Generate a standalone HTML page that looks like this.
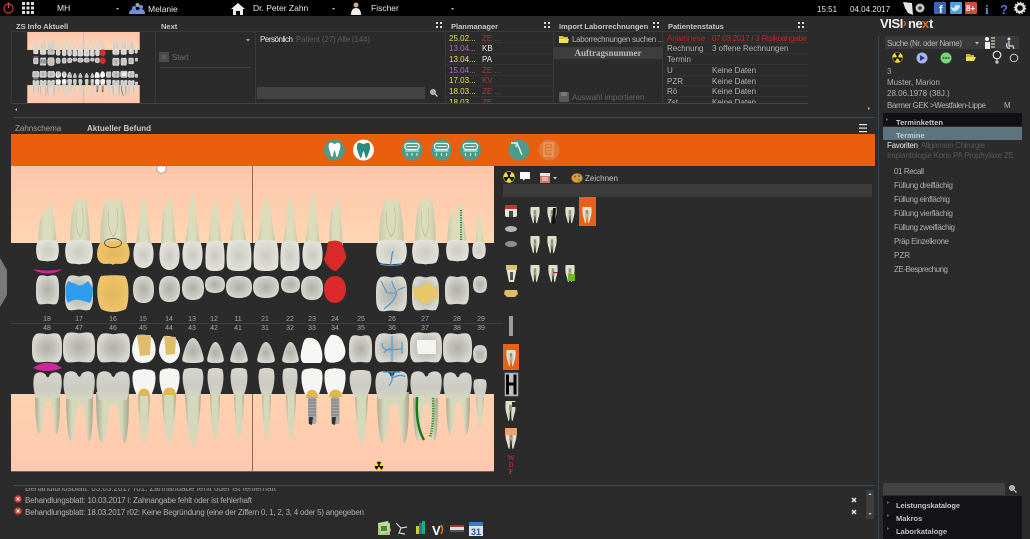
<!DOCTYPE html>
<html><head><meta charset="utf-8"><title>VISInext Zahnschema</title>
<style>
html,body{margin:0;padding:0;background:#2b2b2b;width:1030px;height:539px;overflow:hidden}
svg{display:block;font-family:"Liberation Sans",sans-serif}
#root{filter:blur(.3px)}
text{font-size:8px;fill:#b4b4b4}
.b{font-weight:bold}
.w{fill:#e8e8e8}
.d{fill:#5c5c5c}
.h{font-weight:bold;fill:#c8c8c8;font-size:7.5px}
.n{font-size:7px;fill:#a8a8a8;text-anchor:middle}
</style></head><body>
<svg id="root" width="1030" height="539" viewBox="0 0 1030 539" xmlns="http://www.w3.org/2000/svg">
<defs>
<filter id="s" x="-5%" y="-5%" width="110%" height="110%"><feGaussianBlur stdDeviation="0.3"/></filter>
<filter id="gray"><feColorMatrix type="saturate" values="0.15"/></filter>
<linearGradient id="pu" x1="0" y1="0" x2="0" y2="1"><stop offset="0" stop-color="#fec6ac"/><stop offset="1" stop-color="#ffd6b2"/></linearGradient>
<linearGradient id="pl" x1="0" y1="0" x2="0" y2="1"><stop offset="0" stop-color="#ffd2b0"/><stop offset="1" stop-color="#ffc8b0"/></linearGradient>
<linearGradient id="rt" x1="0" y1="0" x2="1" y2="0"><stop offset="0" stop-color="#c6c8a8"/><stop offset=".3" stop-color="#dadcbc"/><stop offset=".7" stop-color="#dadcbc"/><stop offset="1" stop-color="#c2c4a4"/></linearGradient>
<linearGradient id="rl" x1="0" y1="0" x2="1" y2="0"><stop offset="0" stop-color="#a8aa92"/><stop offset=".22" stop-color="#d6d8bc"/><stop offset=".78" stop-color="#d6d8bc"/><stop offset="1" stop-color="#a4a68e"/></linearGradient>
<radialGradient id="cg"><stop offset="0" stop-color="#cbcbc3"/><stop offset=".6" stop-color="#d8d8d0"/><stop offset="1" stop-color="#e2e2da"/></radialGradient>
<radialGradient id="cd"><stop offset="0" stop-color="#b0b0a8"/><stop offset=".65" stop-color="#c6c6be"/><stop offset="1" stop-color="#d8d8d0"/></radialGradient>
<linearGradient id="cl" x1="0" y1="0" x2="0" y2="1"><stop offset="0" stop-color="#d6d6ce"/><stop offset=".6" stop-color="#cbcbc3"/><stop offset="1" stop-color="#d4d6c2"/></linearGradient>
<radialGradient id="au"><stop offset="0" stop-color="#e2b65c"/><stop offset="1" stop-color="#efc468"/></radialGradient>

<symbol id="r1" viewBox="0 0 100 100" preserveAspectRatio="none"><path fill="url(#rt)" d="M50 0C60 6 72 32 82 58C90 78 97 92 100 100L0 100C3 92 10 78 18 58C28 32 40 6 50 0Z"/></symbol>
<symbol id="r2" viewBox="0 0 100 100" preserveAspectRatio="none"><path fill="url(#rt)" d="M0 100C0 65 6 25 22 8C30 0 42 2 50 10C58 -2 76 -2 84 12C96 45 100 80 100 100Z"/><path fill="none" stroke="#bcbe9e" stroke-width="3" d="M32 26C27 50 32 72 50 82C66 72 70 48 62 20"/></symbol>
<symbol id="r3" viewBox="0 0 100 100" preserveAspectRatio="none"><path fill="url(#rt)" d="M0 100C2 70 8 38 20 26C28 16 36 24 42 24C50 10 60 0 72 0C80 25 92 65 100 100Z"/></symbol>
<symbol id="l1" viewBox="0 0 100 100" preserveAspectRatio="none"><path fill="url(#rl)" d="M0 0L100 0C98 40 78 85 60 100C55 102 45 102 40 100C22 85 2 40 0 0Z"/></symbol>
<symbol id="l2" viewBox="0 0 100 100" preserveAspectRatio="none"><path fill="url(#rl)" d="M0 0L100 0C100 45 98 85 88 98C76 102 74 60 66 30C60 20 46 20 40 32C34 62 30 100 16 98C4 88 0 40 0 0Z"/></symbol>
<symbol id="cu" viewBox="0 0 100 100" preserveAspectRatio="none"><path fill="url(#cg)" d="M12 5C30 -2 70 -2 88 5C100 25 102 60 90 82C76 96 64 100 50 100C36 100 22 96 10 82C-2 60 0 25 12 5Z"/></symbol>
<symbol id="ci" viewBox="0 0 100 100" preserveAspectRatio="none"><path fill="url(#cg)" d="M10 3C30 -1 70 -1 90 3C98 25 100 60 96 85C92 98 70 100 50 100C30 100 8 98 4 85C0 60 2 25 10 3Z"/></symbol>
<symbol id="cm" viewBox="0 0 100 100" preserveAspectRatio="none"><path fill="url(#cg)" d="M8 4C30 -2 70 -2 92 4C102 30 102 60 92 86C80 100 66 92 50 98C34 92 20 100 8 86C-2 60 -2 30 8 4Z"/></symbol>
<symbol id="oo" viewBox="0 0 100 100" preserveAspectRatio="none"><path fill="url(#cd)" d="M50 0C82 0 100 14 100 50C100 86 82 100 50 100C18 100 0 86 0 50C0 14 18 0 50 0Z"/></symbol>
<symbol id="om" viewBox="0 0 100 100" preserveAspectRatio="none"><path fill="url(#cd)" d="M14 3C30 -2 42 4 50 4C60 4 72 -2 88 3C100 14 100 32 100 50C100 72 100 86 88 97C72 100 62 96 50 96C38 96 26 100 12 97C0 86 0 72 0 50C0 32 0 14 14 3Z"/></symbol>
<symbol id="ot" viewBox="0 0 100 100" preserveAspectRatio="none"><path fill="url(#cd)" d="M50 0C72 0 88 40 98 78C102 94 96 100 50 100C4 100 -2 94 2 78C12 40 28 0 50 0Z"/></symbol>
<symbol id="lm" viewBox="0 0 100 100" preserveAspectRatio="none"><path fill="url(#cl)" d="M6 10C16 -2 34 -2 44 10C48 24 54 24 58 10C68 -2 88 -2 96 12C104 40 96 78 90 100L10 100C4 78 -4 40 6 10Z"/></symbol>
<symbol id="ls" viewBox="0 0 100 100" preserveAspectRatio="none"><path fill="url(#cl)" d="M10 5C30 -2 70 -2 90 5C106 30 92 78 76 100L24 100C8 78 -6 30 10 5Z"/></symbol>
<symbol id="lw" viewBox="0 0 100 100" preserveAspectRatio="none"><path fill="#f5f5f3" d="M50 0C60 4 84 0 94 12C104 36 94 76 80 100L20 100C6 76 -4 36 6 12C16 0 40 4 50 0Z"/></symbol>
<symbol id="mini" viewBox="0 0 16 22" preserveAspectRatio="none"><path fill="#e0e0cc" d="M1 0C5 -1 11 -1 15 0C16 7 15 11 13.500 14C12 18 11.500 21 10.500 21C9 21 9.500 12 8 9C6.500 12 7 21 5.500 21C4.500 21 4 18 2.500 14C1 11 0 7 1 0Z"/><path fill="#8f917e" d="M6 4C6 9 5.500 14 5.500 17L6.500 11C7 8 8.500 8 9.500 11L10.500 17C10.500 14 10 9 10 4Z"/></symbol>
<symbol id="tw" viewBox="0 0 20 20" preserveAspectRatio="none"><path fill="#fff" d="M5 3C8 2 9 4 10 4C11 4 13 2 15 3C17 5 16 9 15 11C14 14 13.500 17 12.500 17C11.500 17 11.500 12 10 10C8.500 12 8.500 17 7.500 17C6.500 17 6 14 5 11C4 9 3 5 5 3Z"/></symbol>
<symbol id="rad" viewBox="0 0 20 20"><circle cx="10" cy="10" r="9.500" fill="#f4e02c"/><path fill="#111" d="M10 10L5.500 2.500A9 9 0 0 1 14.500 2.500ZM10 10L18.500 10A9 9 0 0 1 14.500 17.500ZM10 10L5.500 17.500A9 9 0 0 1 1.500 10Z"/><circle cx="10" cy="10" r="2" fill="#111"/></symbol>
<g id="chartbg">
<rect x="11" y="166" width="483" height="77" fill="url(#pu)"/>
<rect x="11" y="394" width="483" height="77.500" fill="url(#pl)"/>
<rect x="11" y="471" width="483" height=".8" fill="#8a6a5c"/>
<rect x="252" y="166" width="1" height="77" fill="#8a6a5c"/>
<rect x="252" y="394" width="1" height="77" fill="#8a6a5c"/>
</g>
<g id="teeth">
<g filter="url(#s)">
<!-- upper roots -->
<use href="#r3" x="38" y="203" width="19" height="42"/>
<use href="#r2" x="70" y="198" width="20" height="47"/>
<use href="#r2" x="100" y="198" width="27" height="47"/>
<use href="#r1" x="136" y="195" width="15" height="50"/>
<use href="#r3" x="161" y="197" width="15" height="48"/>
<use href="#r1" x="185" y="192" width="15" height="53"/>
<use href="#r1" x="208" y="195" width="14" height="50"/>
<use href="#r1" x="229" y="195" width="18" height="50"/>
<use href="#r1" x="257" y="195" width="19" height="50"/>
<use href="#r1" x="283" y="195" width="15" height="50"/>
<use href="#r1" x="305" y="192" width="15" height="53"/>
<use href="#r3" x="329" y="197" width="14" height="48"/>
<use href="#r2" x="379" y="198" width="25" height="47"/>
<use href="#r2" x="415" y="198" width="21" height="47"/>
<use href="#r3" x="447" y="203" width="20" height="42"/>
<use href="#r1" x="475" y="212" width="9" height="33"/>
<path d="M461 210V240" stroke="#2c8a3a" stroke-width="2" stroke-dasharray="1.200 1.200" fill="none"/>
<!-- upper buccal crowns -->
<use href="#cm" x="36" y="240" width="23" height="22"/>
<use href="#cm" x="65" y="240" width="28" height="25"/>
<path fill="url(#au)" d="M100 243C108 240 120 240 127 243C131 250 130 258 127 262C120 266 116 262 113 265C110 262 104 266 100 262C96 258 96 250 100 243Z"/>
<ellipse cx="113" cy="243" rx="8.500" ry="4.500" fill="none" stroke="#3b3428" stroke-width=".7"/>
<use href="#cu" x="133" y="242" width="21" height="26"/>
<use href="#cu" x="159" y="242" width="21" height="28"/>
<use href="#cu" x="182" y="241" width="21" height="29"/>
<use href="#ci" x="205" y="241" width="20" height="30"/>
<use href="#ci" x="226" y="240" width="26" height="31"/>
<use href="#ci" x="253" y="240" width="26" height="31"/>
<use href="#ci" x="280" y="241" width="20" height="30"/>
<use href="#cu" x="302" y="241" width="21" height="29"/>
<path fill="#d92a2a" d="M328 242C333 240 339 240 342 243C344 250 347 256 346 259C342 265 338 271 335 271C331 270 325 264 324 259C326 254 327 248 328 242Z"/>
<use href="#cm" x="376" y="240" width="31" height="25"/>
<path d="M380 264C386 266 396 266 402 264M393 251C391 256 392 261 390 265" stroke="#3f8fd0" stroke-width="1.200" fill="none"/>
<use href="#cm" x="412" y="240" width="27" height="25"/>
<use href="#cm" x="446" y="240" width="23" height="22"/>
<use href="#cu" x="472" y="242" width="14" height="17"/>
<!-- upper occlusal -->
<use href="#om" x="36" y="275" width="23" height="30"/>
<use href="#om" x="65" y="275" width="28" height="36"/>
<path fill="#2f9cf0" d="M68 281L76 284C80 287 83 285 88 281L93 288C93 295 92 299 90 303L80 300C76 299 72 300 68 303C65 298 65 290 66 286Z"/>
<path fill="url(#au)" d="M101 276C110 275 120 275 125 276C130 283 129 302 126 309C118 313 108 313 101 309C96 300 96 283 101 276Z"/>
<use href="#oo" x="133" y="276" width="21" height="27"/>
<use href="#oo" x="159" y="276" width="21" height="26"/>
<use href="#oo" x="182" y="276" width="22" height="24"/>
<use href="#oo" x="205" y="276" width="20" height="17"/>
<use href="#oo" x="226" y="276" width="26" height="22"/>
<use href="#oo" x="253" y="276" width="26" height="22"/>
<use href="#oo" x="281" y="276" width="19" height="17"/>
<use href="#oo" x="301" y="276" width="22" height="24"/>
<path fill="#dc2a2a" d="M335 276C342 276 346 282 346 289C346 298 340 303 335 303C329 303 324 298 324 289C324 282 328 276 335 276Z"/>
<use href="#om" x="376" y="276" width="31" height="36"/>
<path d="M381 281L387 293M392 281C392 287 398 290 396 295C393 303 388 305 384 309M398 290L405 287M388 293H396" stroke="#4a96d8" stroke-width="1.100" fill="none"/>
<use href="#om" x="412" y="276" width="27" height="35"/>
<path fill="#e7c768" d="M413 286L421 288L422 284L431 284L431 288L438 285L438 299L430 299L429 303L421 303L421 299L414 300Z"/>
<use href="#om" x="445" y="276" width="24" height="29"/>
<use href="#oo" x="473" y="276" width="14" height="17"/>
<path d="M33 269C42 271 53 271 62 269C55 275 40 275 33 269Z" fill="#d0259a"/>
<path d="M33 368C42 361 53 361 62 368C53 372 42 372 33 368Z" fill="#d0259a"/>
<!-- lower occlusal -->
<use href="#om" x="32" y="333" width="30" height="30"/>
<use href="#om" x="63" y="332" width="32" height="31"/>
<use href="#om" x="97" y="333" width="33" height="30"/>
<path fill="#f5f5f3" d="M137 335C146 334 152 335 154 341C157 350 156 358 149 362C142 364 136 363 134 358C130 350 133 341 137 335Z"/>
<path fill="#e0bd6a" d="M137 335L151 335L150 355L140 356Z"/>
<path fill="#f5f5f3" d="M164 336C172 335 178 338 179 345C182 352 178 362 171 363C165 364 160 358 159 352C159 346 161 340 164 336Z"/>
<path fill="#e0bd6a" d="M164 336L176 337L175 354L166 355Z"/>
<use href="#ot" x="182" y="338" width="22" height="25"/>
<use href="#ot" x="207" y="342" width="17" height="21"/>
<use href="#ot" x="230" y="342" width="18" height="21"/>
<use href="#ot" x="257" y="342" width="18" height="21"/>
<use href="#ot" x="282" y="342" width="17" height="21"/>
<path fill="#f7f7f5" d="M307 338C314 337 319 340 321 348C323 354 323 362 320 363L304 363C300 362 300 354 302 348C303 343 304 339 307 338Z"/>
<path fill="#f7f7f5" d="M331 335C338 334 342 338 344 345C347 352 345 358 340 361C335 363 328 364 326 360C322 350 326 340 331 335Z"/>
<use href="#om" x="349" y="335" width="23" height="28"/>
<use href="#om" x="375" y="333" width="33" height="30"/>
<path d="M392 336V361M382 343C382 352 388 350 402 349M402 342V354M384 353C386 349 390 349 392 349" stroke="#4a9ee0" stroke-width="1.200" fill="none"/>
<use href="#om" x="410" y="332" width="32" height="31"/>
<path fill="#f3f3ef" d="M417 340L436 340L436 354L418 354L417 348Z"/>
<use href="#om" x="443" y="333" width="29" height="30"/>
<use href="#oo" x="473" y="345" width="14" height="18"/>
<!-- lower roots -->
<use href="#l2" x="35" y="392" width="25" height="43"/>
<use href="#l2" x="66" y="392" width="27" height="50"/>
<use href="#l2" x="96" y="392" width="33" height="52"/>
<use href="#l1" x="138" y="392" width="12" height="51"/>
<use href="#l1" x="162" y="392" width="14" height="50"/>
<use href="#l1" x="185" y="392" width="16" height="53"/>
<use href="#l1" x="210" y="392" width="10" height="48"/>
<use href="#l1" x="234" y="392" width="10" height="47"/>
<use href="#l1" x="262" y="392" width="9" height="47"/>
<use href="#l1" x="286" y="392" width="10" height="47"/>
<use href="#l1" x="355" y="392" width="13" height="51"/>
<use href="#l2" x="377" y="392" width="32" height="52"/>
<use href="#l2" x="413" y="392" width="25" height="50"/>
<use href="#l2" x="446" y="392" width="24" height="43"/>
<use href="#l1" x="476" y="392" width="8" height="35"/>
<!-- lower buccal crowns -->
<use href="#lm" x="33" y="372" width="29" height="26"/>
<use href="#lm" x="63" y="371" width="32" height="28"/>
<use href="#lm" x="96" y="371" width="34" height="29"/>
<use href="#lw" x="132" y="369" width="24" height="26"/>
<path fill="#dfb84f" d="M138 396C138 386 150 386 150 396Z"/>
<use href="#lw" x="159" y="368" width="21" height="27"/>
<path fill="#dfb84f" d="M163 395C163 385 176 385 176 395Z"/>
<use href="#ls" x="182" y="368" width="22" height="29"/>
<use href="#ls" x="207" y="368" width="17" height="27"/>
<use href="#ls" x="230" y="368" width="18" height="27"/>
<use href="#ls" x="258" y="368" width="17" height="27"/>
<use href="#ls" x="282" y="368" width="16" height="27"/>
<use href="#lw" x="301" y="368" width="22" height="27"/>
<use href="#lw" x="324" y="368" width="22" height="27"/>
<use href="#ls" x="349" y="370" width="23" height="27"/>
<use href="#lm" x="375" y="371" width="33" height="28"/>
<path d="M392 371V381L389 386M392 378C396 376 402 374 405 377M383 372H400" stroke="#3f94dc" stroke-width="1.200" fill="none"/>
<use href="#lm" x="410" y="371" width="32" height="27"/>
<use href="#lm" x="443" y="372" width="29" height="26"/>
<use href="#ls" x="473" y="379" width="14" height="18"/>
<!-- implants -->
<path fill="#dfb84f" d="M306 398C306 387 318 387 318 398Z"/>
<path fill="#dfb84f" d="M329 397C329 387 342 387 342 397Z"/>
<rect x="308" y="397" width="8.500" height="27" rx="2" fill="#a8a8a8"/>
<path d="M308 400H316M308 403H316M308 406H316M308 409H316M308 412H316M308 415H316" stroke="#6a6a6a" stroke-width=".8"/>
<path d="M309 417L313 417L312 425L309 424Z" fill="#333"/>
<rect x="331" y="397" width="8.500" height="27" rx="2" fill="#a8a8a8"/>
<path d="M331 400H339M331 403H339M331 406H339M331 409H339M331 412H339M331 415H339" stroke="#6a6a6a" stroke-width=".8"/>
<path d="M332 417L336 417L335 425L332 424Z" fill="#333"/>
<!-- endo on 37 -->
<path d="M417 397C416 415 418 430 424 440" stroke="#137a1a" stroke-width="2.500" fill="none"/>
<path d="M433 398C434 412 433 428 430 437" stroke="#1f8a2c" stroke-width="2.500" stroke-dasharray="1.200 1.300" fill="none"/>
</g>
</g>
</defs>

<rect width="1030" height="539" fill="#2b2b2b"/>

<!-- TOP BAR -->
<rect width="1030" height="16" fill="#000"/>
<circle cx="8.500" cy="8.500" r="4.500" fill="none" stroke="#b33434" stroke-width="1.400"/>
<path d="M8.500 2.500V8" stroke="#d24a4a" stroke-width="1.400"/>
<g fill="#ddd"><rect x="22" y="2" width="3" height="3"/><rect x="26.500" y="2" width="3" height="3"/><rect x="31" y="2" width="3" height="3"/><rect x="22" y="6.500" width="3" height="3"/><rect x="26.500" y="6.500" width="3" height="3"/><rect x="31" y="6.500" width="3" height="3"/><rect x="22" y="11" width="3" height="3"/><rect x="26.500" y="11" width="3" height="3"/><rect x="31" y="11" width="3" height="3"/></g>
<text x="57" y="11" style="font-size:8.500px" class="w">MH</text>
<path d="M116 8h3l-1.500 2z" fill="#bbb"/>
<g fill="#6f8fd8"><circle cx="134" cy="8" r="2"/><circle cx="141" cy="7" r="2"/><circle cx="137.500" cy="5" r="2" fill="#9ab"/><path d="M129 14c0-4 3-5 5-5s4 1 4 5zM136 14c0-4 3-5 5-5s4 1 4 5z"/></g>
<text x="148" y="12" style="font-size:8.500px" class="w">Melanie</text>
<path d="M231 9L238 3L245 9L243 9V15H240V11H236V15H233V9Z" fill="#eee"/>
<text x="253" y="11" style="font-size:8.500px" class="w">Dr. Peter Zahn</text>
<path d="M332 8h3l-1.500 2z" fill="#bbb"/>
<circle cx="356" cy="5" r="2.500" fill="#d6a888"/><path d="M351 15c0-5 2-7 5-7s5 2 5 7z" fill="#eee"/>
<text x="371" y="11" style="font-size:8.500px" class="w">Fischer</text>
<path d="M451 8h3l-1.500 2z" fill="#bbb"/>
<text x="817" y="12" style="font-size:8px" class="w">15:51</text>
<text x="850" y="12" style="font-size:8px" class="w">04.04.2017</text>
<path d="M903 2L912 3L913 15L908 13L905 8Z" fill="#e6e6e6"/>
<circle cx="920" cy="8" r="4.500" fill="#c8c8c8"/><circle cx="920" cy="8" r="1.800" fill="#333"/>
<rect x="934" y="2" width="12" height="12" rx="1" fill="#3b66b0"/><text x="939" y="13" class="b" style="font-size:11px;fill:#fff">f</text>
<rect x="950" y="2" width="12" height="12" rx="1" fill="#4aa0d8"/><path d="M952 11c4 1 8-1 8-6-2 1-3-1-5 1-1 1-1 2-1 2-2 0-2-1-3-1 0 2 1 3 2 3z" fill="#cfe9f8"/>
<rect x="965" y="2" width="12" height="12" rx="1" fill="#c9503f"/><text x="966" y="11" class="b" style="font-size:8px;fill:#fff">8+</text>
<text x="985" y="14" class="b" style="font-size:13px;fill:#5a8fd0;font-family:'Liberation Serif',serif">i</text>
<text x="1000" y="14" class="b" style="font-size:13px;fill:#5a6fd0">?</text>
<circle cx="1020" cy="8" r="4" fill="none" stroke="#ddd" stroke-width="2.400"/><circle cx="1020" cy="8" r="5.600" fill="none" stroke="#ddd" stroke-width="1.200" stroke-dasharray="1.500 1.400"/>

<!-- TOP PANELS -->
<text x="16" y="29" class="h">ZS Info Aktuell</text>
<text x="161" y="29" class="h">Next</text>
<text x="451" y="29" class="h">Planmanager</text>
<text x="559" y="29" class="h">Import Laborrechnungen</text>
<text x="668" y="29" class="h">Patientenstatus</text>
<g fill="#ddd">
<path d="M436 22h2v2h-2zM440 22h2v2h-2zM436 26h2v2h-2zM440 26h2v2h-2z"/>
<path d="M544 22h2v2h-2zM548 22h2v2h-2zM544 26h2v2h-2zM548 26h2v2h-2z"/>
<path d="M653 22h2v2h-2zM657 22h2v2h-2zM653 26h2v2h-2zM657 26h2v2h-2z"/>
<path d="M798 22h2v2h-2zM802 22h2v2h-2zM798 26h2v2h-2zM802 26h2v2h-2z"/>
</g>
<rect x="11" y="31" width="797" height=".8" fill="#3e3e3e"/>
<rect x="11" y="103" width="797" height=".8" fill="#4a4a4a"/>
<rect x="11" y="31" width=".8" height="72" fill="#3e3e3e"/>
<rect x="155" y="31" width=".8" height="72" fill="#3e3e3e"/>
<rect x="255" y="31" width=".8" height="72" fill="#3e3e3e"/>
<rect x="445" y="31" width=".8" height="72" fill="#3e3e3e"/>
<rect x="553" y="31" width=".8" height="72" fill="#3e3e3e"/>
<rect x="662" y="31" width=".8" height="72" fill="#3e3e3e"/>

<!-- mini chart -->
<svg x="27" y="32" width="113" height="71" viewBox="11 166 483 305"><use href="#chartbg"/><g filter="url(#gray)"><use href="#teeth"/></g><circle cx="335" cy="256" r="13" fill="#d92a2a"/><circle cx="335" cy="289" r="13" fill="#dc2a2a"/></svg>

<!-- Next -->
<path d="M246 39h4l-2 2.500z" fill="#aaa"/>
<rect x="159" y="52" width="10" height="10" fill="#4c4c4c"/><rect x="162" y="55" width="4" height="4" fill="#5e5e5e"/>
<text x="172" y="60" class="d" style="fill:#6e6e6e">Start</text>
<rect x="160" y="67" width="91" height=".8" fill="#444"/>

<!-- Persönlich -->
<text x="260" y="42" class="w" textLength="33">Persönlich</text>
<text x="296" y="42" class="d" textLength="74">Patient (27) Alle (144)</text>
<rect x="257" y="87" width="168" height="12" fill="#434343"/>
<circle cx="433" cy="92" r="2.500" fill="#aaa" stroke="#ddd" stroke-width=".8"/><path d="M435 94l2.500 2.500" stroke="#ddd" stroke-width="1.200"/>

<!-- Planmanager -->
<g fill="#3a3a3a"><rect x="446" y="42.500" width="107" height=".7"/><rect x="446" y="53.500" width="107" height=".7"/><rect x="446" y="64" width="107" height=".7"/><rect x="446" y="75" width="107" height=".7"/><rect x="446" y="85.500" width="107" height=".7"/><rect x="446" y="96" width="107" height=".7"/></g>
<g style="font-size:8px">
<text x="449" y="41" style="fill:#e6e04a">25.02...</text><text x="482" y="41" style="fill:#a23c40">ZE ...</text>
<text x="449" y="51" style="fill:#b06cc0">13.04...</text><text x="482" y="51" class="w">KB</text>
<text x="449" y="62" style="fill:#e6e04a">13.04...</text><text x="482" y="62" class="w">PA</text>
<text x="449" y="73" style="fill:#b06cc0">15.04...</text><text x="482" y="73" style="fill:#a23c40">ZE ...</text>
<text x="449" y="83" style="fill:#e6e04a">17.03...</text><text x="482" y="83" style="fill:#a23c40">KV</text>
<text x="449" y="94" style="fill:#e6e04a">18.03...</text><text x="482" y="94" style="fill:#a23c40">ZE ...</text>
<svg x="446" y="96" width="107" height="7" viewBox="446 96 107 7" overflow="hidden"><text x="449" y="105" style="fill:#e6e04a;font-size:8px">18.03...</text><text x="482" y="105" style="fill:#a23c40;font-size:8px">ZE ...</text></svg>
</g>

<!-- Import -->
<path d="M559 36h4l1 1h4v6h-9z" fill="#d8c23c"/><path d="M559 39h10l-1 4h-9z" fill="#f1e25a"/>
<text x="572" y="42" textLength="90">Laborrechnungen suchen ..</text>
<rect x="554" y="47" width="108" height="12" fill="#3d3d3d"/>
<text x="608" y="56" class="b" style="text-anchor:middle;fill:#bbb;font-family:'Liberation Serif',serif;font-size:9px">Auftragsnummer</text>
<rect x="559" y="92" width="10" height="10" rx="1" fill="#5a5a5a"/><rect x="561" y="92" width="6" height="4" fill="#777"/>
<text x="572" y="100" class="d" style="fill:#666">Auswahl importieren</text>

<!-- Patientenstatus -->
<g fill="#3a3a3a"><rect x="663" y="42.500" width="145" height=".7"/><rect x="663" y="53.500" width="145" height=".7"/><rect x="663" y="64" width="145" height=".7"/><rect x="663" y="75" width="145" height=".7"/><rect x="663" y="85.500" width="145" height=".7"/><rect x="663" y="96" width="145" height=".7"/></g>
<text x="667" y="41" style="fill:#c62020">Anamnese</text><text x="712" y="41" style="fill:#d02424" textLength="95">07.03.2017 / 3 Risikoangabe</text>
<text x="667" y="51">Rechnung</text><text x="712" y="51">3 offene Rechnungen</text>
<text x="667" y="62">Termin</text>
<text x="667" y="73">U</text><text x="712" y="73">Keine Daten</text>
<text x="667" y="84">PZR</text><text x="712" y="84">Keine Daten</text>
<text x="667" y="94">Rö</text><text x="712" y="94">Keine Daten</text>
<svg x="663" y="96" width="145" height="7" viewBox="663 96 145 7"><text x="667" y="105" style="fill:#b4b4b4;font-size:8px">Zst</text><text x="712" y="105" style="fill:#b4b4b4;font-size:8px">Keine Daten</text></svg>

<path d="M17 108l-2 1.500 2 1.500z" fill="#bbb"/>
<path d="M868 107l2 1.500-2 1.500z" fill="#bbb"/>
<rect x="13" y="117" width="862" height=".8" fill="#3c5362"/>

<!-- ZAHNSCHEMA HEADER -->
<text x="15" y="131" style="fill:#a0a0a0">Zahnschema</text>
<text x="87" y="131" class="b" style="fill:#c8c8c8">Aktueller Befund</text>
<rect x="859" y="124" width="8" height="1.200" fill="#e8e8e8"/><rect x="859" y="127.500" width="8" height="1.200" fill="#e8e8e8"/><rect x="859" y="131" width="8" height="1.200" fill="#e8e8e8"/>

<!-- ORANGE BAND -->
<rect x="11" y="134" width="864" height="32" fill="#ea5f0e"/>
<circle cx="334.500" cy="150" r="10.500" fill="#4f9b89"/><use href="#tw" x="325" y="140" width="19" height="20"/>
<circle cx="363.500" cy="150" r="10.500" fill="#fbfbfb"/>
<path fill="#2b8a7c" d="M358 143C360 142 362 144 363.500 144C365 144 367 142 369 143C371 146 370 150 369 152C368 155 367 158 366 158C365 158 365 153 363.500 151C362 153 362 158 361 158C360 158 359 155 358 152C357 150 356 146 358 143Z"/>
<g>
<circle cx="412" cy="150" r="10.500" fill="#4f9b89"/><rect x="405" y="143.500" width="14" height="6" rx="2.500" fill="none" stroke="#fff" stroke-width="1.200"/><rect x="407" y="146" width="10" height="1" fill="#fff"/><path d="M405 151h14M407 153v3M412 153v3M417 153v3" stroke="#cfe" stroke-width="1"/>
<circle cx="441.500" cy="150" r="10.500" fill="#4f9b89"/><rect x="434.500" y="143.500" width="14" height="6" rx="2.500" fill="none" stroke="#fff" stroke-width="1.200"/><rect x="436.500" y="146" width="10" height="1" fill="#fff"/><path d="M434.500 151h14M436.500 153v3M441.500 153v3M446.500 153v3" stroke="#cfe" stroke-width="1"/>
<circle cx="470.500" cy="150" r="10.500" fill="#4f9b89"/><rect x="463.500" y="143.500" width="14" height="6" rx="2.500" fill="none" stroke="#fff" stroke-width="1.200"/><rect x="465.500" y="146" width="10" height="1" fill="#fff"/><path d="M463.500 151h14M465.500 153v3M470.500 153v3M475.500 153v3" stroke="#cfe" stroke-width="1"/>
</g>
<circle cx="519" cy="150" r="10.500" fill="#4f9b89"/><path d="M511 143h6l5 12M517 143l-1 4" stroke="#dff" stroke-width="1.400" fill="none"/>
<circle cx="549" cy="150" r="10.500" fill="#dd7a3a"/><rect x="544" y="143" width="9" height="13" fill="none" stroke="#f2a36c" stroke-width="1.100"/><path d="M546 146h5M546 149h6M546 152h6" stroke="#f2a36c" stroke-width="1"/>

<!-- CHART -->
<use href="#chartbg"/>
<use href="#teeth"/>
<use href="#rad" x="374" y="461" width="10" height="10"/>
<path d="M157 166h9v5l-3 2h-3l-3-2z" fill="#fff" stroke="#777" stroke-width=".6"/>
<path d="M0 258L7 270V295L0 307Z" fill="#7a7a7a"/>
<rect x="11" y="323" width="492" height=".7" fill="#4a4a4a"/>
<text class="n" x="47" y="321">18</text><text class="n" x="79" y="321">17</text><text class="n" x="113" y="321">16</text><text class="n" x="143" y="321">15</text><text class="n" x="169" y="321">14</text><text class="n" x="192" y="321">13</text><text class="n" x="214" y="321">12</text><text class="n" x="238" y="321">11</text><text class="n" x="265" y="321">21</text><text class="n" x="290" y="321">22</text><text class="n" x="312" y="321">23</text><text class="n" x="335" y="321">24</text><text class="n" x="361" y="321">25</text><text class="n" x="392" y="321">26</text><text class="n" x="425" y="321">27</text><text class="n" x="457" y="321">28</text><text class="n" x="481" y="321">29</text>
<text class="n" x="47" y="330">48</text><text class="n" x="79" y="330">47</text><text class="n" x="113" y="330">46</text><text class="n" x="143" y="330">45</text><text class="n" x="169" y="330">44</text><text class="n" x="192" y="330">43</text><text class="n" x="214" y="330">42</text><text class="n" x="238" y="330">41</text><text class="n" x="265" y="330">31</text><text class="n" x="290" y="330">32</text><text class="n" x="312" y="330">33</text><text class="n" x="335" y="330">34</text><text class="n" x="361" y="330">35</text><text class="n" x="392" y="330">36</text><text class="n" x="425" y="330">37</text><text class="n" x="457" y="330">38</text><text class="n" x="481" y="330">39</text>

<!-- TOOLBAR -->
<use href="#rad" x="503" y="171" width="12" height="12"/>
<path d="M520 172h10v7h-5l-2 2v-2h-3z" fill="#fff"/>
<rect x="540" y="173" width="10" height="10" fill="#c9786a"/><rect x="540" y="173" width="10" height="3" fill="#e6e6e6"/><rect x="542" y="177" width="6" height="4" fill="#eee" opacity=".5"/>
<path d="M553 177h4l-2 2.500z" fill="#ccc"/>
<ellipse cx="577" cy="178" rx="5.500" ry="4.800" fill="#d89a3c"/><circle cx="575" cy="176.500" r="1" fill="#c33"/><circle cx="579" cy="176" r="1" fill="#36c"/><circle cx="579" cy="180" r="1" fill="#3a3"/>
<text x="585" y="181" style="fill:#c4c4c4">Zeichnen</text>
<rect x="503" y="184" width="369" height="13" fill="#3b3b3b"/>

<!-- side tools -->
<rect x="505" y="205" width="12" height="12" rx="2" fill="#e8e6dc"/><rect x="505" y="205" width="12" height="4" fill="#c73636"/><rect x="509" y="211" width="4" height="6" fill="#444"/>
<ellipse cx="511" cy="229" rx="6" ry="3" fill="#b5b5ae"/><ellipse cx="511" cy="244" rx="6" ry="3" fill="#8f8f8a"/>
<path d="M506 265h11l-1 7-2 10h-5l-2-10z" fill="#e8e8d0"/><path d="M506 265h11v5h-11z" fill="#e0c068"/><rect x="510" y="272" width="3" height="8" fill="#555"/>
<path d="M505 290h12l1 4-3 3h-8l-3-3z" fill="#e4bb62"/>
<rect x="509" y="316" width="4" height="20" fill="#9c9c9c"/>
<rect x="503" y="344" width="16" height="26" fill="#e9601a"/>
<use href="#mini" x="506" y="350" width="10" height="17"/>
<rect x="505" y="373" width="13" height="23" fill="#c0c0c0" stroke="#999" stroke-width=".6"/>
<path d="M507.500 374.500v20M515 374.500v20M507.500 384h8" stroke="#000" stroke-width="3"/>
<use href="#mini" x="505" y="401" width="11" height="21"/>
<rect x="512" y="402" width="4" height="5" fill="#2b2b2b"/>
<use href="#mini" x="505" y="429" width="12" height="21"/>
<path d="M505 428h12v7h-12z" fill="#eda271"/>
<text x="511" y="460" class="b" style="fill:#c01a4a;font-size:7px;text-anchor:middle;font-family:'Liberation Serif',serif">W</text>
<text x="511" y="467" class="b" style="fill:#c01a4a;font-size:7px;text-anchor:middle;font-family:'Liberation Serif',serif">D</text>
<text x="511" y="474" class="b" style="fill:#c8382a;font-size:7px;text-anchor:middle;font-family:'Liberation Serif',serif">F</text>

<!-- tooth grid -->
<use href="#mini" x="530" y="207" width="10" height="17"/>
<use href="#mini" x="547" y="207" width="10" height="17"/>
<path d="M553 208L556 208L555 224L552 224Z" fill="#111"/>
<use href="#mini" x="565" y="207" width="10" height="17"/>
<rect x="579" y="197" width="17" height="29" fill="#e9601a"/>
<use href="#mini" x="582" y="207" width="10" height="17"/>
<use href="#mini" x="530" y="236" width="10" height="18"/>
<use href="#mini" x="547" y="236" width="10" height="18"/>
<use href="#mini" x="530" y="265" width="10" height="18"/>
<use href="#mini" x="548" y="265" width="10" height="18"/>
<rect x="553" y="272" width="5" height="1.200" fill="#a22a3a"/>
<use href="#mini" x="565" y="265" width="10" height="18"/>
<rect x="568" y="274" width="7" height="7" fill="#6cba28"/>

<!-- BOTTOM -->
<rect x="13" y="485" width="862" height=".8" fill="#3c5362"/>
<svg x="25" y="488" width="300" height="3" viewBox="25 488 300 3"><text x="25" y="491" style="fill:#9a9a9a;font-size:8px">Behandlungsblatt: 03.03.2017 r01: Zahnangabe fehlt oder ist fehlerhaft</text></svg>
<circle cx="18" cy="499" r="3.800" fill="#d13b3b"/><path d="M16.500 497.500l3 3M19.500 497.500l-3 3" stroke="#fff" stroke-width=".9"/>
<text x="25" y="503" textLength="227" style="fill:#b0b0b0">Behandlungsblatt: 10.03.2017 i: Zahnangabe fehlt oder ist fehlerhaft</text>
<circle cx="18" cy="511" r="3.800" fill="#d13b3b"/><path d="M16.500 509.500l3 3M19.500 509.500l-3 3" stroke="#fff" stroke-width=".9"/>
<text x="25" y="515" textLength="339" style="fill:#b0b0b0">Behandlungsblatt: 18.03.2017 r02: Keine Begründung (eine der Ziffern 0, 1, 2, 3, 4 oder 5) angegeben</text>
<path d="M852 498l4 4M856 498l-4 4M852 510l4 4M856 510l-4 4" stroke="#f0f0f0" stroke-width="1.400"/>
<rect x="866" y="490" width="8" height="29" fill="#3e3e3e"/>
<path d="M868.500 495h3l-1.500-2zM868.500 513h3l-1.500 2z" fill="#ccc"/>

<!-- bottom icons -->
<rect x="378" y="523" width="12" height="12" fill="#a8c878"/><path d="M378 523l10-2 3 10-10 3z" fill="#c0d89a"/><rect x="381" y="526" width="6" height="5" fill="#4a8a3a"/>
<path d="M396 523l5 5 6-1M401 528l-2 5 6 1" stroke="#cfd8e0" stroke-width="1.200" fill="none"/>
<rect x="416" y="526" width="3" height="8" fill="#cc3"/><rect x="419" y="523" width="3" height="11" fill="#36b"/><rect x="422" y="521" width="3" height="13" fill="#2a7"/>
<text x="432" y="535" class="b" style="font-size:13px;fill:#fff">V</text><path d="M441 525c2 2 2 6 0 9" stroke="#e06a1a" stroke-width="1.600" fill="none"/>
<rect x="450" y="525" width="14" height="7" fill="#ddd"/><rect x="450" y="525" width="14" height="2" fill="#a33"/><rect x="450" y="530" width="14" height="2" fill="#555"/>
<rect x="469" y="522" width="14" height="14" fill="#d8e4f2"/><rect x="469" y="522" width="14" height="4" fill="#3b7ac8"/><text x="471" y="535" class="b" style="font-size:9px;fill:#2a5a9a">31</text>

<!-- RIGHT PANEL -->
<rect x="878" y="36" width=".9" height="503" fill="#2f4a5e"/>
<text x="880" y="28" class="b" style="font-size:13px;fill:#f0f0f0;letter-spacing:-.4px">VISI</text>
<text x="903" y="27" class="b" style="font-size:12px;fill:#e0701c">›</text>
<text x="908" y="28" class="b" style="font-size:13px;fill:#f0f0f0;letter-spacing:-.4px">ne</text>
<text x="922" y="28" class="b" style="font-size:13px;fill:#e0701c">x</text>
<text x="929" y="28" class="b" style="font-size:13px;fill:#f0f0f0">t</text>

<rect x="885" y="36" width="134" height="13" fill="#3a3a3a"/>
<text x="887" y="46" textLength="75" style="fill:#b8b8b8">Suche (Nr. oder Name)</text>
<path d="M975 42h4l-2 2.500z" fill="#bbb"/>
<circle cx="987" cy="39" r="2" fill="#eee"/><path d="M985 42h5v7h-5z" fill="#eee"/><path d="M991 38h4M991 41h4M991 44h4M991 47h4" stroke="#cfd8c0" stroke-width="1.200"/>
<circle cx="1009" cy="39" r="1.500" fill="#ddd"/><path d="M1009 41l0 5 4 0 1 3M1007 43c-1 3 0 6 3 5" stroke="#ddd" stroke-width="1.200" fill="none"/>

<use href="#rad" x="892" y="52" width="11" height="11"/>
<circle cx="922" cy="58" r="5.500" fill="#aab4e4"/><path d="M920 55l5 3-5 3z" fill="#223a8a"/>
<circle cx="946" cy="58" r="5.500" fill="#7bd47a"/><circle cx="943.500" cy="58" r="1" fill="#264"/><circle cx="946" cy="58" r="1" fill="#264"/><circle cx="948.500" cy="58" r="1" fill="#264"/>
<path d="M966 54h4l1 1h3v6h-8z" fill="#c8b030"/><path d="M966 57h10l-2 4h-8z" fill="#f0e060"/>
<circle cx="997" cy="55" r="3.800" fill="none" stroke="#eee" stroke-width="1.100"/><path d="M997 59v5M995 62h4" stroke="#eee" stroke-width="1.100"/>
<circle cx="1014" cy="58" r="3.800" fill="none" stroke="#ddd" stroke-width=".9"/>

<text x="887" y="74" style="fill:#a8a8a8">3</text>
<text x="887" y="85" style="fill:#b4b4b4">Muster, Marion</text>
<text x="887" y="96" style="fill:#b4b4b4">28.06.1978 (38J.)</text>
<text x="887" y="108" textLength="99" style="fill:#b4b4b4">Barmer GEK &gt;Westfalen-Lippe</text>
<text x="1004" y="108" style="fill:#b4b4b4">M</text>

<rect x="883" y="113" width="139" height="13" fill="#111114"/>
<path d="M886 118l2.500 1.500-2.500 1.500z" fill="#666"/>
<text x="896" y="125" class="b" style="fill:#c8c8c8;font-size:7.500px" textLength="47">Terminketten</text>
<rect x="883" y="127" width="139" height="13" fill="#5d747f"/>
<text x="896" y="138" class="b" style="fill:#c0ccd2;font-size:7.500px">Termine</text>
<text x="887" y="148" class="w" textLength="31">Favoriten</text>
<text x="921" y="148" textLength="64" style="fill:#585858">Allgemein Chirurgie</text>
<text x="887" y="158" textLength="127" style="fill:#585858">Implantologie Kons PA Prophylaxe ZE</text>
<text x="894" y="174" textLength="30" style="fill:#b0b0b0">01 Recall</text>
<text x="894" y="188" textLength="59" style="fill:#b0b0b0">Füllung dreiflächig</text>
<text x="894" y="202" textLength="56" style="fill:#b0b0b0">Füllung einflächig</text>
<text x="894" y="216" textLength="59" style="fill:#b0b0b0">Füllung vierflächig</text>
<text x="894" y="230" textLength="61" style="fill:#b0b0b0">Füllung zweiflächig</text>
<text x="894" y="244" textLength="55" style="fill:#b0b0b0">Präp Einzelkrone</text>
<text x="894" y="258" style="fill:#b0b0b0">PZR</text>
<text x="894" y="272" textLength="54" style="fill:#b0b0b0">ZE-Besprechung</text>

<rect x="883" y="483" width="122" height="12" fill="#434343"/>
<circle cx="1012" cy="488" r="2.500" fill="#aaa" stroke="#ddd" stroke-width=".8"/><path d="M1014 490l2.500 2.500" stroke="#ddd" stroke-width="1.200"/>
<rect x="883" y="496" width="139" height="43" fill="#131317"/>
<path d="M887 501l2.500 1.500-2.500 1.500zM887 514l2.500 1.500-2.500 1.500zM887 527l2.500 1.500-2.500 1.500z" fill="#666"/>
<text x="896" y="508" class="b" style="fill:#c0c0c0;font-size:7.500px" textLength="64">Leistungskataloge</text>
<text x="896" y="521" class="b" style="fill:#c0c0c0;font-size:7.500px">Makros</text>
<text x="896" y="534" class="b" style="fill:#c0c0c0;font-size:7.500px" textLength="51">Laborkataloge</text>
</svg>
</body></html>
